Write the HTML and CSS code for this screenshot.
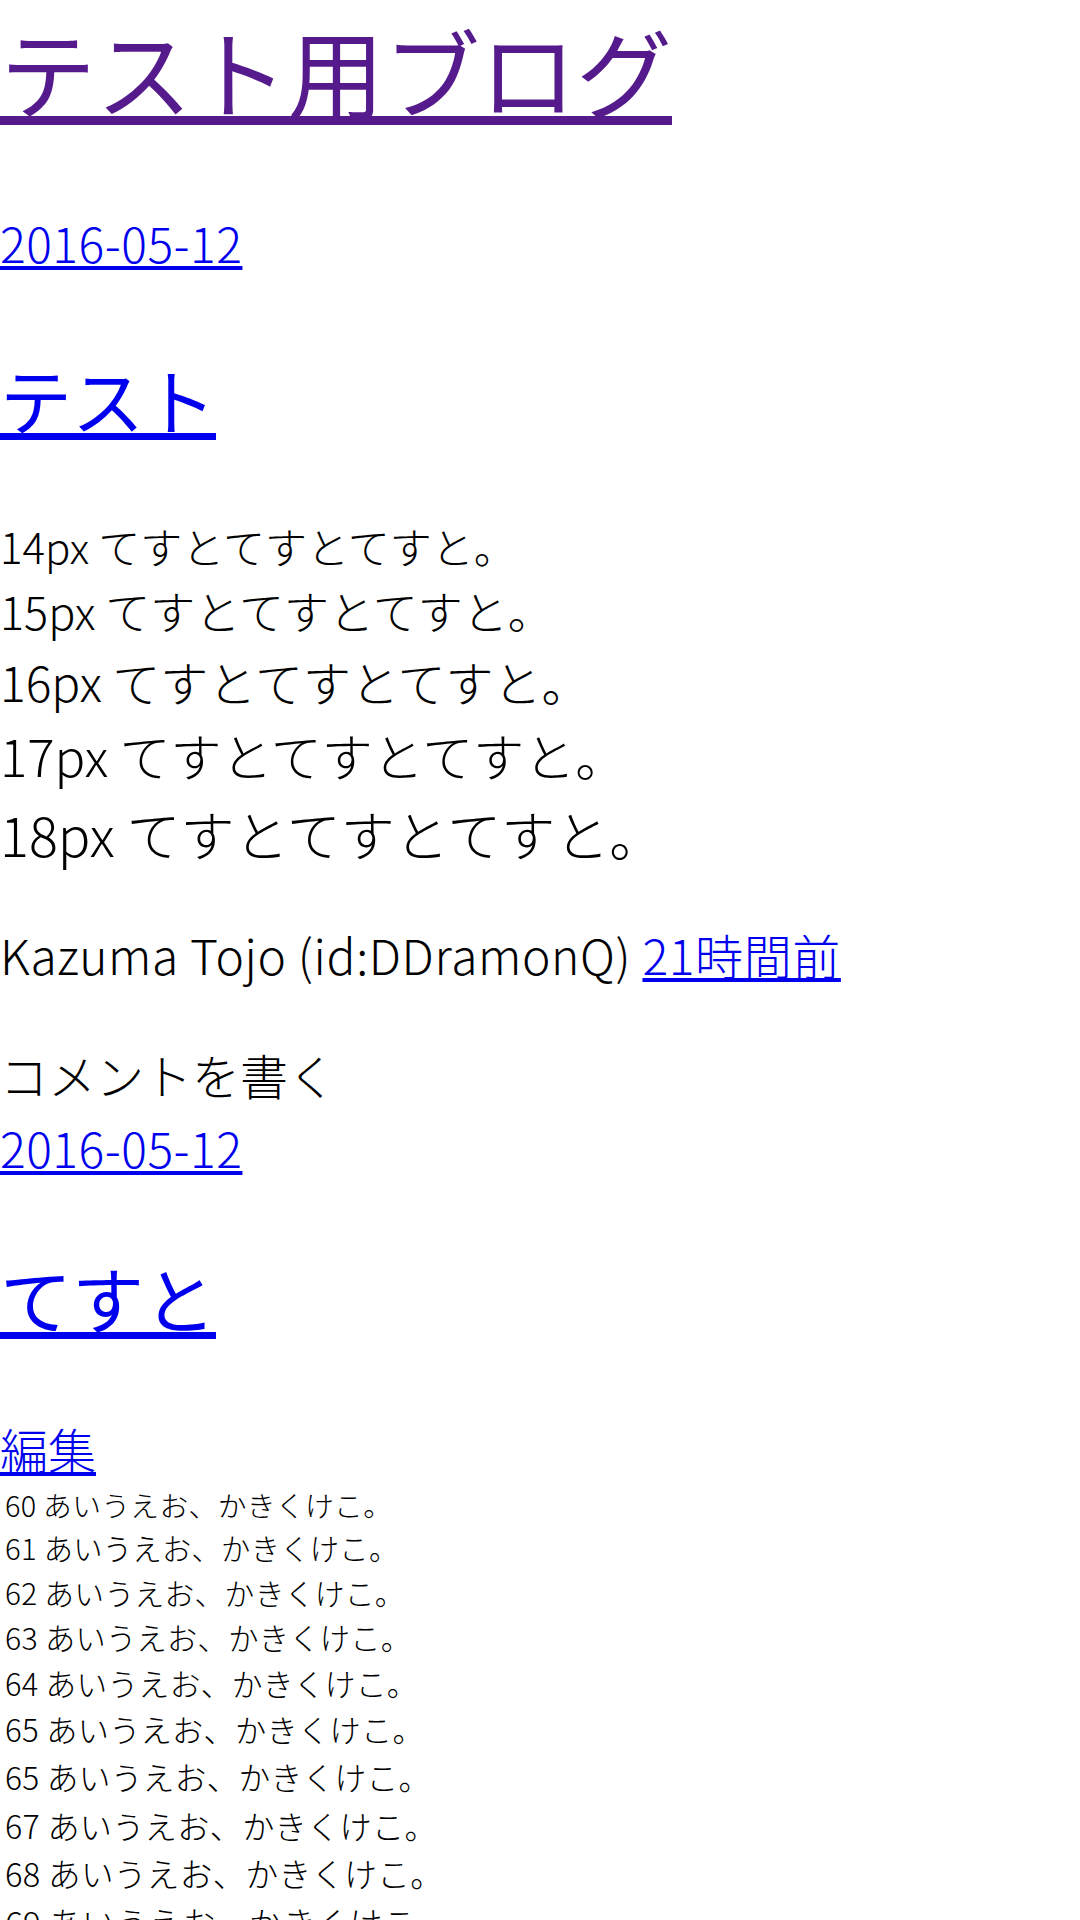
FILE: index.html
```html
<!DOCTYPE html>
<html lang="ja">
<head>
<meta charset="utf-8">
<title>テスト用ブログ</title>
<link rel="stylesheet" href="styles.css">
</head>
<body>
<header class="blog-header">
  <h1 class="blog-title"><a class="link-visited" href="#">テスト用ブログ</a></h1>
</header>

<article class="entry entry-first">
  <div class="entry-date"><a href="#">2016-05-12</a></div>
  <h2 class="entry-title"><a href="#">テスト</a></h2>
  <div class="entry-content">
    <div class="size-line s14">14px てすとてすとてすと。</div>
    <div class="size-line s15">15px てすとてすとてすと。</div>
    <div class="size-line s16">16px てすとてすとてすと。</div>
    <div class="size-line s17">17px てすとてすとてすと。</div>
    <div class="size-line s18">18px てすとてすとてすと。</div>
  </div>
  <div class="entry-footer">Kazuma Tojo (id:DDramonQ) <a href="#">21時間前</a></div>
  <div class="entry-comment">コメントを書く</div>
</article>

<article class="entry entry-second">
  <div class="entry-date"><a href="#">2016-05-12</a></div>
  <h2 class="entry-title"><a href="#">てすと</a></h2>
  <div class="entry-edit"><a href="#">編集</a></div>
  <div class="entry-content pct-lines">
    <div class="pct-line p60">60 あいうえお、かきくけこ。</div>
    <div class="pct-line p61">61 あいうえお、かきくけこ。</div>
    <div class="pct-line p62">62 あいうえお、かきくけこ。</div>
    <div class="pct-line p63">63 あいうえお、かきくけこ。</div>
    <div class="pct-line p64">64 あいうえお、かきくけこ。</div>
    <div class="pct-line p65">65 あいうえお、かきくけこ。</div>
    <div class="pct-line p66">65 あいうえお、かきくけこ。</div>
    <div class="pct-line p67">67 あいうえお、かきくけこ。</div>
    <div class="pct-line p68">68 あいうえお、かきくけこ。</div>
    <div class="pct-line p69">69 あいうえお、かきくけこ。</div>
  </div>
</article>
</body>
</html>
```

FILE: styles.css
```css
html {
  background: #ffffff;
}

body {
  margin: 0;
  font-family: "Noto Sans CJK JP", "Noto Sans CJK SC", sans-serif;
  font-weight: 300;
  font-size: 48px;
  color: #000000;
}

a {
  color: #0000ee;
  text-decoration: underline;
}

a.link-visited {
  color: #551a8b;
}

.blog-title {
  margin: 0 0 68px;
  font-size: 96px;
  font-weight: 400;
}

.entry-date {
  font-size: 48px;
  letter-spacing: 0.5px;
}

.entry-title {
  margin: 68px 0 64px;
  font-size: 72px;
  font-weight: 400;
}

.size-line {
  line-height: 1.5;
}

.s14 { font-size: 42px; }
.s15 { font-size: 45px; }
.s16 { font-size: 48px; }
.s17 { font-size: 51px; }
.s18 { font-size: 54px; }

.entry-footer {
  margin-top: 45px;
  letter-spacing: 0.6px;
}

.entry-comment {
  margin-top: 50px;
}

.entry-second .entry-date {
  margin-top: 3px;
}

.entry-second .entry-title {
  margin: 62px 0 64px;
}

.pct-lines {
  padding-left: 5px;
}

.pct-line {
  line-height: 1.5;
  letter-spacing: 0.3px;
}

.p60 { font-size: 60%; }
.p61 { font-size: 61%; }
.p62 { font-size: 62%; }
.p63 { font-size: 63%; }
.p64 { font-size: 64%; }
.p65 { font-size: 65%; }
.p66 { font-size: 66%; }
.p67 { font-size: 67%; }
.p68 { font-size: 68%; }
.p69 { font-size: 69%; }
```
